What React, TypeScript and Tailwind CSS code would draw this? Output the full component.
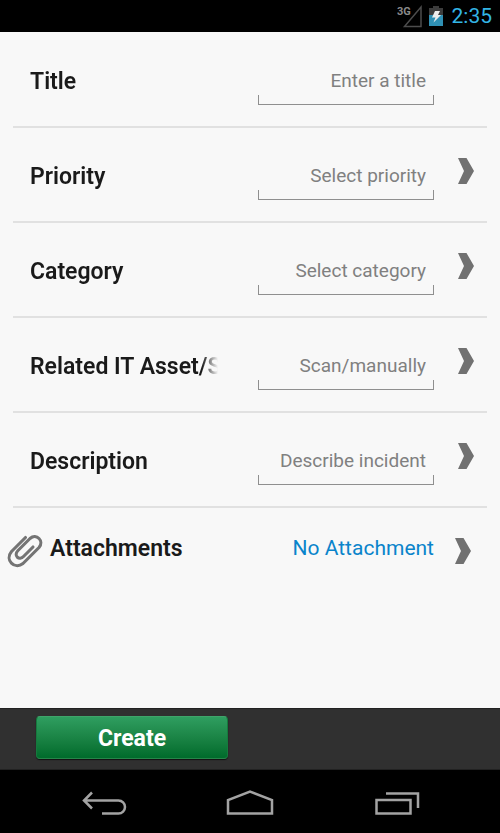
import type { ReactNode } from 'react';

type FieldProps = {
  id: string;
  label: string;
  children: ReactNode;
  chevron?: boolean;
};

const fieldClass =
  "block h-7 w-full appearance-none bg-transparent px-2 text-right text-[19px] leading-7 text-[#808080] outline-none [text-align-last:right] placeholder:text-[#808080] placeholder:opacity-100";

const Chevron = () => (
  <svg viewBox="0 0 16 26" className="block h-[26px] w-4" fill="#717171">
    <path d="M0 0h8.500L16 13 8.500 26H0L6 13z" />
  </svg>
);

const Field = ({ id, label, children, chevron = true }: FieldProps) => (
  <div className="flex h-[95px] items-start border-b-2 border-[#e1e1e1] pr-[13px] pl-[17px]">
    <label
      htmlFor={id}
      className="mt-[33px] mr-10 min-w-0 flex-1 overflow-hidden text-[23px] leading-8 font-semibold whitespace-nowrap text-[#1a1a1a] [mask-image:linear-gradient(to_right,black_calc(100%-16px),transparent)]"
    >
      {label}
    </label>
    <div className="mt-[34px] w-44">
      {children}
      <div className="h-[10px] border-x border-b border-[#8f8f8f]" />
    </div>
    <div className="mt-[30px] ml-6 w-4">
      {chevron && (
        <button type="button" aria-label={`Open ${label}`} className="block">
          <Chevron />
        </button>
      )}
    </div>
  </div>
);

const StatusBar = () => (
  <header className="flex h-8 items-center justify-end bg-black pr-2">
    <svg viewBox="0 0 26 24" className="mr-[7px] h-6 w-[26px]">
      <text x="1" y="11" fontSize="11" fontWeight="700" fontFamily="Roboto, sans-serif" fill="#8a8a8a">3G</text>
      <path d="M25 3v19.500H8.500z" fill="none" stroke="#4c4c4c" strokeWidth="1.500" />
    </svg>
    <svg viewBox="0 0 14 20" className="mr-[9px] h-5 w-3.5">
      <path d="M4 0h6v2h4v7H0V2h4z" fill="#3c3c3c" />
      <path d="M0 9h14v11H0z" fill="#2f90b4" />
      <path d="M6 5h5L9 9h3L4.500 16.500 6.500 11.500H3z" fill="#eee" />
    </svg>
    <time className="text-[21px] leading-8 text-[#33b5e5]">2:35</time>
  </header>
);

const NavBar = () => (
  <nav className="flex h-[63px] items-center justify-between bg-black px-20 pt-[3px]">
    <button type="button" aria-label="Back">
      <svg viewBox="0 0 48 30" className="block h-[30px] w-12" fill="none" stroke="#a3a3a3" strokeWidth="2.500">
        <path d="M12 4.500 4 12.500l8 8M4 12.500h34.500a6.500 6.500 0 0 1 0 13H22" />
      </svg>
    </button>
    <button type="button" aria-label="Home">
      <svg viewBox="0 0 50 30" className="block h-[30px] w-[50px]" fill="none" stroke="#a3a3a3" strokeWidth="2.500">
        <path d="M3 25.500V12L25 3.500 47 12v13.500z" />
      </svg>
    </button>
    <button type="button" aria-label="Recent apps">
      <svg viewBox="0 0 48 30" className="block h-[30px] w-12" fill="none" stroke="#a3a3a3" strokeWidth="2.500">
        <path d="M4.500 12h34v13.500h-34zM14 5.500h32v14.500" />
      </svg>
    </button>
  </nav>
);

const App = () => {
  return (
    <div className="flex min-h-screen flex-col bg-[#f8f8f8] font-[Roboto,sans-serif]">
      <StatusBar />

      <form id="incident" className="flex-1" onSubmit={(e) => e.preventDefault()}>
        <div className="px-[13px] pt-px">
          <Field id="title" label="Title" chevron={false}>
            <input id="title" type="text" placeholder="Enter a title" className={fieldClass} />
          </Field>
          <Field id="priority" label="Priority">
            <select id="priority" className={fieldClass}>
              <option value="">Select priority</option>
            </select>
          </Field>
          <Field id="category" label="Category">
            <select id="category" className={fieldClass}>
              <option value="">Select category</option>
            </select>
          </Field>
          <Field id="asset" label="Related IT Asset/S">
            <input id="asset" type="text" placeholder="Scan/manually" className={fieldClass} />
          </Field>
          <Field id="description" label="Description">
            <input id="description" type="text" placeholder="Describe incident" className={fieldClass} />
          </Field>
        </div>

        <div className="flex items-start pt-6 pr-[29px] pl-[7px]">
          <svg
            viewBox="0 0 36 34"
            className="mt-[2px] mr-[7px] h-[34px] w-9"
            fill="none"
            stroke="#747474"
            strokeWidth="3.100"
            strokeLinecap="round"
            strokeLinejoin="round"
          >
            <path d="M18.500 3.500 4.500 17.500C-2.500 26 7.500 36 16 29.500L32 13.500C37.500 7 29.500-1 23 4.500L11 16.500C6 22 12.500 27 16.500 22.500L26 13" />
          </svg>
          <span className="flex-1 pt-px text-[23px] leading-8 font-semibold text-[#1a1a1a]">Attachments</span>
          <a href="#attachments" className="text-[21px] leading-8 text-[#0a84cb]">No Attachment</a>
          <button type="button" aria-label="Open attachments" className="mt-[6px] ml-[21px]">
            <Chevron />
          </button>
        </div>
      </form>

      <footer className="flex h-[62px] items-start border-y border-[#222] bg-[#303030] px-9 pt-[7px]">
        <button
          type="submit"
          form="incident"
          className="h-[43px] w-48 rounded-[4px] border border-t-[#3fa56a] border-x-[#167a3e] border-b-[#258549] bg-linear-to-b from-[#2f9e60] to-[#006b2b] pt-0.5 text-[23px] leading-8 font-bold text-white shadow-[0_1px_1px_#111]"
        >
          Create
        </button>
      </footer>
      <NavBar />
    </div>
  );
};

export default App;
